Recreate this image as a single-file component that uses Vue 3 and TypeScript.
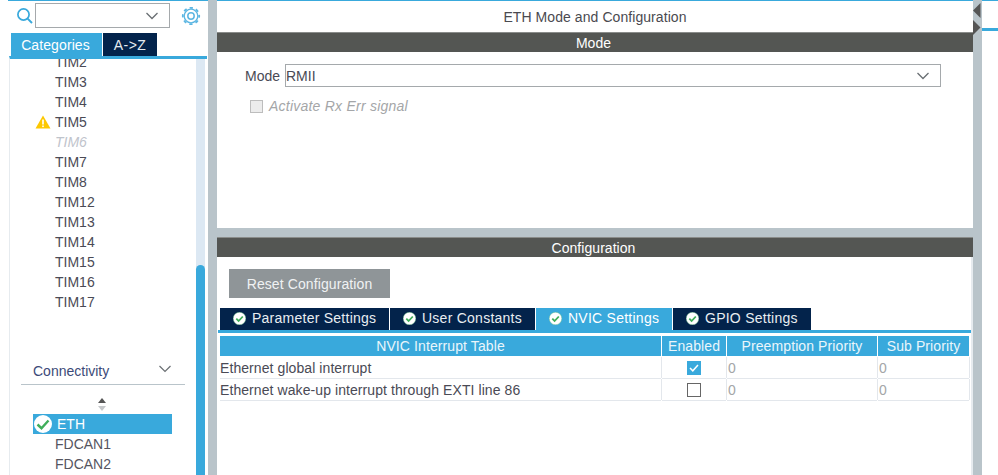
<script setup lang="ts">
const tims = [
  { n: 'TIM2' }, { n: 'TIM3' }, { n: 'TIM4' }, { n: 'TIM5', warn: true }, { n: 'TIM6', off: true },
  { n: 'TIM7' }, { n: 'TIM8' }, { n: 'TIM12' }, { n: 'TIM13' }, { n: 'TIM14' }, { n: 'TIM15' }, { n: 'TIM16' }, { n: 'TIM17' },
]
const tabs = [
  { n: 'Parameter Settings', w: 'w1' },
  { n: 'User Constants', w: 'w2' },
  { n: 'NVIC Settings', w: 'w3', active: true },
  { n: 'GPIO Settings', w: 'w4' },
]
const rows = [
  { n: 'Ethernet global interrupt', on: true },
  { n: 'Ethernet wake-up interrupt through EXTI line 86', on: false },
]
</script>

<template>
  <div class="app">
    <aside class="left">
      <div class="searchrow">
        <svg class="search" width="18" height="18" viewBox="0 0 18 18"><circle cx="7.5" cy="7.5" r="5.6" fill="none" stroke="#39a9dc" stroke-width="1.7"/><path d="M11.6 11.6 16 16" stroke="#39a9dc" stroke-width="2"/></svg>
        <div class="combo"><svg width="14" height="8" viewBox="0 0 14 8"><path d="M1.5 1 7 6.5 12.5 1" fill="none" stroke="#6a6f73" stroke-width="1.3"/></svg></div>
        <svg class="gear" width="20" height="20" viewBox="0 0 20 20"><circle cx="10" cy="10" r="6.8" fill="none" stroke="#5cb6e2" stroke-width="1.3"/><circle cx="10" cy="10" r="8.2" fill="none" stroke="#5cb6e2" stroke-width="1.8" stroke-dasharray="3.2 3.24" stroke-dashoffset="1.6"/><circle cx="10" cy="10" r="3.2" fill="none" stroke="#5cb6e2" stroke-width="1.5"/></svg>
      </div>
      <div class="cattabs">
        <div class="cat on">Categories</div>
        <div class="cat">A-&gt;Z</div>
      </div>
      <div class="listwrap">
        <div class="list">
          <div class="tims">
            <div v-for="t in tims" :key="t.n" class="tim" :class="{ off: t.off }">
              <svg v-if="t.warn" class="warn" width="16" height="14" viewBox="0 0 16 14"><path d="M8 .5 15.5 13.5H.5z" fill="#fdc800"/><rect x="7.2" y="4.5" width="1.6" height="5" fill="#fff"/><rect x="7.2" y="10.5" width="1.6" height="1.6" fill="#fff"/></svg>
              {{ t.n }}
            </div>
          </div>
          <div class="conn"><span>Connectivity</span><svg width="14" height="8" viewBox="0 0 14 8"><path d="M1.5 1 7 6.5 12.5 1" fill="none" stroke="#6a6f73" stroke-width="1.2"/></svg></div>
          <div class="sort"><svg width="10" height="13" viewBox="0 0 10 13"><path d="M5 0 9 5H1z" fill="#555"/><path d="M1 8h8l-4 5z" fill="#c5c8ca"/></svg></div>
          <div class="periph sel">
            <svg width="20" height="20" viewBox="0 0 20 20"><circle cx="10" cy="10" r="9" fill="#fff"/><path d="M4.5 10.5 8.5 14.2 15.5 6.5" fill="none" stroke="#3fae5a" stroke-width="2.4"/></svg>
            ETH
          </div>
          <div class="periph">FDCAN1</div>
          <div class="periph">FDCAN2</div>
        </div>
        <div class="sbar"><div class="thumb"></div></div>
      </div>
    </aside>

    <div class="split"></div>

    <main class="main">
      <div class="title">ETH Mode and Configuration</div>
      <div class="bar">Mode</div>
      <section class="modepane">
        <div class="moderow">
          <label>Mode</label>
          <div class="select"><span>RMII</span><svg width="14" height="8" viewBox="0 0 14 8"><path d="M1.5 1 7 6.5 12.5 1" fill="none" stroke="#6a6f73" stroke-width="1.3"/></svg></div>
        </div>
        <div class="chkrow"><span class="dis"></span><em>Activate Rx Err signal</em></div>
      </section>
      <div class="gap"></div>
      <div class="bar">Configuration</div>
      <section class="conf">
        <button class="reset">Reset Configuration</button>
        <div class="tabs">
          <div v-for="t in tabs" :key="t.n" class="tab" :class="[t.w, { on: t.active }]">
            <svg width="13" height="13" viewBox="0 0 13 13"><circle cx="6.5" cy="6.5" r="6.3" fill="#fff" stroke="#5cb878" stroke-width=".4"/><path d="M3.3 6.7 5.6 9 9.8 4.5" fill="none" stroke="#3fae5a" stroke-width="1.8"/></svg>
            {{ t.n }}
          </div>
        </div>
        <div class="table">
          <div class="th">NVIC Interrupt Table</div>
          <div class="th">Enabled</div>
          <div class="th">Preemption Priority</div>
          <div class="th">Sub Priority</div>
          <template v-for="r in rows" :key="r.n">
            <div class="td">{{ r.n }}</div>
            <div class="td mid">
              <span class="box" :class="{ checked: r.on }"><svg v-if="r.on" width="14" height="14" viewBox="0 0 14 14"><path d="M3 7 5.8 9.8 11 4" fill="none" stroke="#fff" stroke-width="1.5"/></svg></span>
            </div>
            <div class="td num">0</div>
            <div class="td num">0</div>
          </template>
        </div>
      </section>
    </main>

    <div class="split rsplit">
      <svg class="arr1" width="8" height="15" viewBox="0 0 8 15"><path d="M7.5 0v15L0 7.5z" fill="#555"/></svg>
      <svg class="arr2" width="8" height="15" viewBox="0 0 8 15"><path d="M0 0v15L7.5 7.5z" fill="#555"/></svg>
    </div>
    <div class="far"></div>
  </div>
</template>

<style>
html, body { margin: 0; background: #fff; }
</style>

<style scoped>
.app {
  width: 998px; height: 475px; overflow: hidden; display: flex;
  font-family: "Liberation Sans", Arial, sans-serif; font-size: 14px; color: #4a4a55; background: #fff;
}
.left { width: 208px; flex: none; display: flex; flex-direction: column; box-sizing: border-box; position: relative; padding-top: 1px; }
.left::before { content: ""; position: absolute; left: 8px; right: 0; top: 0; height: 1px; background: #39a9dc; }
.searchrow { height: 32px; flex: none; display: flex; align-items: flex-start; padding: 2px 0 0 16px; box-sizing: border-box; }
.search { margin: 4px 1px 0 0; }
.combo { width: 135px; height: 25px; box-sizing: border-box; border: 1px solid #a5a9ac; display: flex; align-items: center; justify-content: flex-end; padding-right: 10px; }
.gear { margin: 3px 0 0 11px; }
.cattabs { height: 23px; flex: none; display: flex; gap: 1px; padding-left: 11px; }
.cat { width: 54px; background: #03234b; color: #e4ebf0; display: flex; align-items: center; justify-content: center; letter-spacing: .5px; }
.cat.on { width: 91px; background: #39a9dc; color: #fff; letter-spacing: .1px; padding-right: 2px; box-sizing: border-box; }
.listwrap { flex: 1; min-height: 0; margin-left: 9px; border-top: 3px solid #39a9dc; border-left: 1px solid #e6ebef; display: flex; overflow: hidden; margin-right: 1px; }
.list { width: 186px; flex: none; }
.tims { height: 260px; margin-top: -7px; padding-bottom: 1px; }
.tim { height: 20px; line-height: 20px; padding-left: 45px; position: relative; color: #4a4a55; }
.tim.off { color: #bfc4cc; font-style: italic; }
.warn { position: absolute; left: 25px; top: 3px; }
.conn { margin: 46px 11px 0 11px; height: 26px; box-sizing: border-box; border-bottom: 1px solid #b9c4ca; display: flex; justify-content: space-between; padding: 4px 13px 0 12px; color: #3c4a78; }
.conn svg { margin-top: 2px; }
.sort { height: 29px; display: flex; justify-content: center; padding: 13px 0 0 0; box-sizing: border-box; margin-right: 2px; }
.periph { height: 20px; line-height: 20px; margin-left: 23px; width: 139px; padding-left: 22px; box-sizing: border-box; position: relative; color: #55555f; }
.periph.sel { background: #39a9dc; color: #fff; display: flex; align-items: center; padding-left: 0; gap: 4px; }
.periph.sel svg { flex: none; }
.sbar { width: 9px; flex: none; background: #dce8f3; display: flex; flex-direction: column; justify-content: flex-end; }
.thumb { height: 210px; background: #39a9dc; border-radius: 5px 5px 0 0; }
.split { width: 9px; flex: none; background: #b9c4ca; }
.main { width: 756px; flex: none; display: flex; flex-direction: column; border-top: 1px solid #39a9dc; box-sizing: border-box; }
.title { height: 31px; line-height: 32px; text-align: center; color: #4a4a50; letter-spacing: .07px; }
.bar { height: 20px; line-height: 21px; background: #545653; color: #fff; text-align: center; flex: none; box-sizing: border-box; border-top: 1px solid #8a8c8a; padding-right: 3px; letter-spacing: .05px; }
.modepane { height: 176px; flex: none; box-sizing: border-box; padding: 12px 0 0 28px; }
.moderow { display: flex; align-items: center; }
.moderow label { width: 40px; color: #4a4a55; }
.select { width: 656px; height: 23px; box-sizing: border-box; border: 1px solid #a5a9ac; display: flex; align-items: center; justify-content: space-between; padding: 0 10px 0 0; }
.chkrow { display: flex; align-items: center; gap: 6px; margin: 11px 0 0 5px; color: #a4a6a8; }
.chkrow em { letter-spacing: .23px; }
.dis { width: 13px; height: 13px; box-sizing: border-box; background: #ececec; border: 1px solid #bdbdbd; }
.gap { height: 9px; flex: none; background: #b9c4ca; }
.conf { flex: 1; min-height: 0; padding: 12px 0 0 3px; box-sizing: border-box; overflow: hidden; border-right: 2px solid #e6ebef; }
.reset { display: block; margin-left: 9px; width: 161px; height: 29px; border: 0; background: #8f9598; color: #f0f2f3; font: 14px "Liberation Sans", Arial, sans-serif; letter-spacing: .1px; padding: 0; }
.tabs { display: flex; gap: 1px; margin: 10px 0 0 -2px; padding-left: 2px; height: 25px; box-sizing: border-box; border-bottom: 3px solid #39a9dc; }
.tab { background: #03234b; color: #e8edf1; display: flex; align-items: center; gap: 6px; padding: 0 0 2px 13px; box-sizing: border-box; letter-spacing: .25px; height: 22px; }
.tab.on { background: #39a9dc; color: #fff; }
.w1 { width: 169px; } .w2 { width: 145px; } .w3 { width: 136px; } .w4 { width: 138px; }
.table { display: grid; grid-template-columns: 441px 64px 150px 91px; column-gap: 1px; row-gap: 1px; margin-top: 3px; }
.th { height: 20px; line-height: 21px; background: #39a9dc; color: #eaf6fb; text-align: center; letter-spacing: .1px; }
.td { height: 21px; line-height: 22px; box-shadow: 0 1px 0 #e3e7ec, 1px 0 0 #e3e7ec; color: #4a4a55; letter-spacing: .08px; }
.td.mid { display: flex; align-items: center; justify-content: center; }
.td.num { color: #a4a6a8; padding-left: 1px; }
.box { width: 14px; height: 14px; box-sizing: border-box; border: 1px solid #666; display: block; }
.box.checked { background: #39a9dc; border: 0; }
.box svg { display: block; }
.rsplit { position: relative; }
.arr1 { position: absolute; left: 0; top: 3px; }
.arr2 { position: absolute; left: 0; top: 20px; }
.far { flex: 1; position: relative; border-top: 1px solid #39a9dc; }
.far::after { content: ""; position: absolute; left: 0; right: 0; top: 27px; height: 3px; background: #39a9dc; }
</style>
